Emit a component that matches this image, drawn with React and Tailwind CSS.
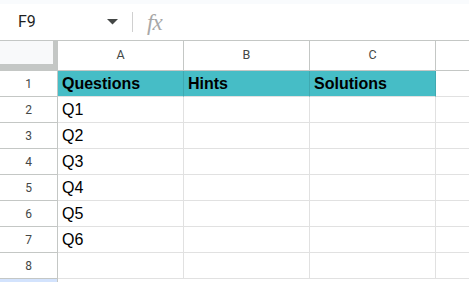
import React from "react";

const cols = ["A", "B", "C"];
const rows = [
  ["Questions", "Hints", "Solutions"],
  ["Q1", "", ""],
  ["Q2", "", ""],
  ["Q3", "", ""],
  ["Q4", "", ""],
  ["Q5", "", ""],
  ["Q6", "", ""],
  ["", "", ""],
];

export default function App() {
  return (
    <div className="w-[469px] h-[282px] overflow-hidden bg-white font-['Liberation_Sans',Arial,sans-serif]">
      <div className="h-[4px] bg-[#f9fbfd]" />
      {/* formula bar */}
      <div className="h-[36px] flex items-center bg-white">
        <div className="w-[132px] flex items-center pl-[18px] pr-[14px] justify-between">
          <span className="text-[16px] text-[#1f1f1f] font-['Roboto',sans-serif]">F9</span>
          <svg width="11" height="6" viewBox="0 0 11 6">
            <path d="M0 0 L11 0 L5.5 5.5 Z" fill="#444746" />
          </svg>
        </div>
        <div className="w-px h-[20px] bg-[#d0d0d0]" />
        <span className="ml-[14px] text-[23px] italic text-[#a8a8a8] font-['Liberation_Serif',serif] leading-none tracking-[-1px]">
          fx
        </span>
      </div>
      {/* column headers */}
      <div className="flex h-[31px] border-t border-b border-[#c4c7c5]">
        <div className="w-[58px] h-full flex-none bg-[#c4c7c5]">
          <div className="w-[53px] h-[23px] bg-[#f8f9fa]" />
        </div>
        {cols.map((c) => (
          <div
            key={c}
            className="w-[126px] flex-none border-r border-[#c4c7c5] flex items-center justify-center text-[12.5px] text-[#444746] font-['Roboto',sans-serif]"
          >
            {c}
          </div>
        ))}
        <div className="flex-1" />
      </div>
      {/* rows */}
      {rows.map((r, i) => (
        <div key={i} className="flex h-[26px]">
          <div className="w-[58px] flex-none border-r border-b border-[#c4c7c5] flex items-center justify-center text-[12px] text-[#444746] font-['Roboto',sans-serif]">
            {i + 1}
          </div>
          {r.map((v, j) => (
            <div
              key={j}
              className={`w-[126px] flex-none border-r border-b flex items-center pl-[4px] text-[16px] text-black ${
                i === 0 ? "bg-[#46bdc6] font-bold border-r-[#3fa9b1] border-b-[#e1e1e1]" : "border-[#e1e1e1]"
              }`}
            >
              {v}
            </div>
          ))}
          <div className="flex-1 border-b border-[#e1e1e1]" />
        </div>
      ))}
      <div className="flex h-[26px]">
        <div className="w-[57px] flex-none bg-[#d3e3fd]" />
        <div className="w-px bg-[#c4c7c5]" />
      </div>
    </div>
  );
}
